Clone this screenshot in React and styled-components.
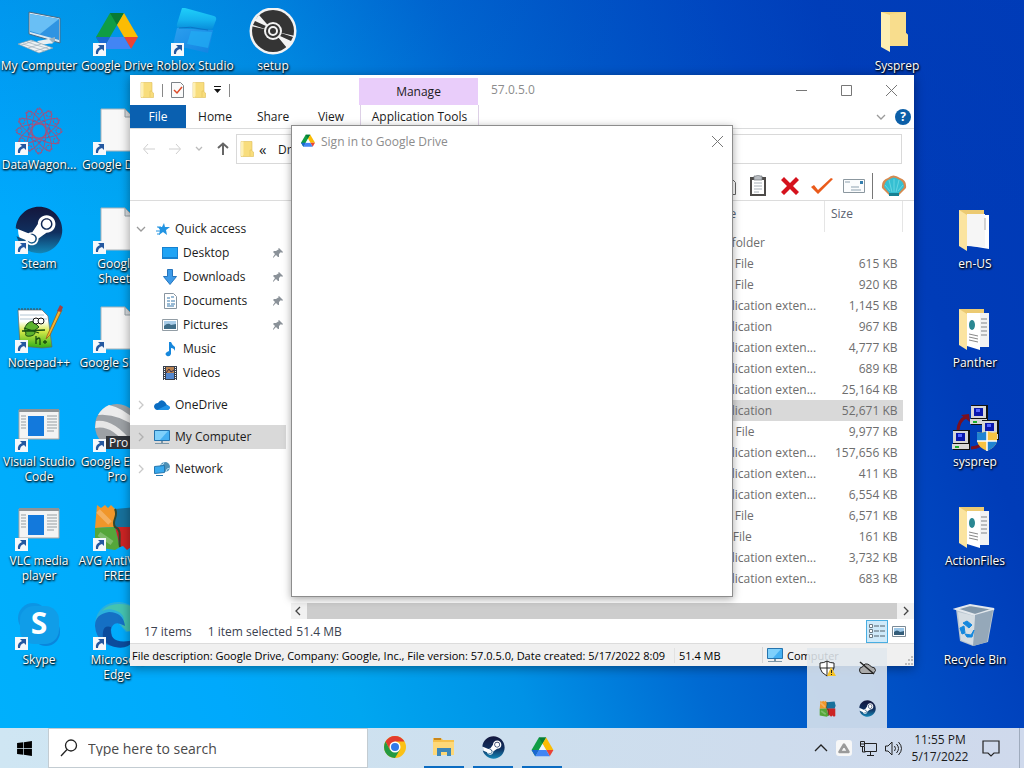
import React from "react";
import styled, { createGlobalStyle, css } from "styled-components";
import { FaSteam, FaWindows } from "react-icons/fa";

const GlobalStyle = createGlobalStyle`
  * {
    box-sizing: border-box;
  }
  body {
    margin: 0;
    font-family: "Open Sans", "Noto Sans", sans-serif;
    font-size: 12px;
    line-height: 15px;
    color: #1b1b1b;
    overflow: hidden;
  }
  button, input {
    font: inherit;
    color: inherit;
  }
  svg {
    display: block;
    flex: none;
  }
`;

const shortcuts = [
  { name: "My Computer", col: 1, row: 1, icon: "computer" },
  { name: "Google Drive", col: 2, row: 1, icon: "drive", link: true },
  { name: "Roblox Studio", col: 3, row: 1, icon: "roblox", link: true },
  { name: "setup", col: 4, row: 1, icon: "disc" },
  { name: "DataWagon...", col: 1, row: 2, icon: "wagon", link: true },
  { name: "Google Docs", col: 2, row: 2, icon: "blank", link: true },
  { name: "Steam", col: 1, row: 3, icon: "steam", link: true },
  { name: "Google Sheets", col: 2, row: 3, icon: "blank", link: true },
  { name: "Notepad++", col: 1, row: 4, icon: "notepad", link: true },
  { name: "Google Slides", col: 2, row: 4, icon: "blank", link: true },
  { name: "Visual Studio Code", col: 1, row: 5, icon: "app", link: true },
  { name: "Google Earth Pro", col: 2, row: 5, icon: "earth", link: true },
  { name: "VLC media player", col: 1, row: 6, icon: "app", link: true },
  { name: "AVG AntiVirus FREE", col: 2, row: 6, icon: "avg", link: true },
  { name: "Skype", col: 1, row: 7, icon: "skype", link: true },
  { name: "Microsoft Edge", col: 2, row: 7, icon: "edge", link: true },
  { name: "Sysprep", col: 12, row: 1, icon: "folder" },
  { name: "en-US", col: 13, row: 3, icon: "folderPaper" },
  { name: "Panther", col: 13, row: 4, icon: "folderDocs" },
  { name: "sysprep", col: 13, row: 5, icon: "sysprep" },
  { name: "ActionFiles", col: 13, row: 6, icon: "folderDocs" },
  { name: "Recycle Bin", col: 13, row: 7, icon: "bin" },
];

const files = [
  { type: "File folder", size: "" },
  { type: "PAK File", size: "615 KB" },
  { type: "PAK File", size: "920 KB" },
  { type: "Application exten...", size: "1,145 KB" },
  { type: "Application", size: "967 KB" },
  { type: "Application exten...", size: "4,777 KB" },
  { type: "Application exten...", size: "689 KB" },
  { type: "Application exten...", size: "25,164 KB" },
  { type: "Application", size: "52,671 KB", selected: true },
  { type: "DAT File", size: "9,977 KB" },
  { type: "Application exten...", size: "157,656 KB" },
  { type: "Application exten...", size: "411 KB" },
  { type: "Application exten...", size: "6,554 KB" },
  { type: "PAK File", size: "6,571 KB" },
  { type: "BIN File", size: "161 KB" },
  { type: "Application exten...", size: "3,732 KB" },
  { type: "Application exten...", size: "683 KB" },
];

const quickAccess = [
  { name: "Desktop", icon: "desktop", pinned: true },
  { name: "Downloads", icon: "downloads", pinned: true },
  { name: "Documents", icon: "documents", pinned: true },
  { name: "Pictures", icon: "pictures", pinned: true },
  { name: "Music", icon: "music" },
  { name: "Videos", icon: "videos" },
];

// ---------- icons ----------

const DriveLogo = ({ size = 48 }) => (
  <svg width={size} height={size} viewBox="0 0 48 48">
    <path d="M17 5h14L17 29 10 41 3 29z" fill="#0f9d45" />
    <path d="M17 5h14l-7 12z" fill="#087a35" />
    <path d="M31 5l14 24H31L24 17z" fill="#fbbc04" />
    <path d="M45 29l-7 12-7-12z" fill="#ea4335" />
    <path d="M17 29h14l7 12H10z" fill="#4285f4" />
    <path d="M3 29h14l-7 12z" fill="#1967d2" />
    <path d="M24 17l7 12H17z" fill="#fff" fillOpacity={size < 32 ? 0.7 : 0} />
  </svg>
);

const SteamLogo = ({ size }) => (
  <svg width={size} height={size} viewBox="0 0 48 48">
    <defs>
      <linearGradient id="steamBlue" x1="0" y1="0" x2="0" y2="1">
        <stop offset="0" stopColor="#14163c" />
        <stop offset=".55" stopColor="#10305f" />
        <stop offset="1" stopColor="#1387b8" />
      </linearGradient>
    </defs>
    <circle cx="24" cy="24" r="21" fill="#fff" />
    <FaSteam x="0" y="0" size={48} fill="url(#steamBlue)" />
  </svg>
);

const AvgLogo = ({ size = 48 }) => (
  <svg width={size} height={size} viewBox="0 0 48 48">
    <path d="M4 2l4 3 4-3 3 3 3-3 4 4v18L2 25z" fill="#f0962a" />
    <path d="M22 6l22-2 3 12-3 9H22z" fill="#17719c" />
    <path d="M2 25l20-1 5 20-5 3-20-3z" fill="#55a63a" />
    <path d="M22 24h24v21l-4 2-4-3-4 3-4-4-3 1z" fill="#cc2424" />
    <path d="M22 6c4 8-4 11 0 18 8 3 3 13 5 20" fill="none" stroke="#31472e" strokeWidth="2" />
    <path d="M5 8l12 12M6 31l13 9" stroke="#fff" strokeOpacity=".25" strokeWidth="5" />
  </svg>
);

const Folder = ({ width = 14, height = 16 }) => (
  <svg width={width} height={height} viewBox="0 0 14 16">
    <path d="M1 .5h11V10l1.500 1v4.500H1z" fill="#f8dd7c" stroke="#dfbe58" strokeWidth=".6" />
    <path d="M1 .5h2.500v13l-1 2L1 15z" fill="#fdf0b5" />
    <path d="M10 15V9h2" fill="none" stroke="#e2c25c" strokeWidth=".6" />
  </svg>
);

const Monitor = () => (
  <svg width="16" height="16" viewBox="0 0 16 16">
    <path d="M.5 1.500h15v10H.5z" fill="#45b0f2" stroke="#2573ad" />
    <path d="M1 2h13L6 11H1z" fill="#7fd0fb" />
    <path d="M7 12h2v2H7zM1 14h14v1H1z" fill="#7b95a6" />
  </svg>
);

const OpenFolder = ({ children }) => (
  <svg width="48" height="48" viewBox="0 0 48 48">
    <path d="M8 4h25v36H8z" fill="#ecca72" />
    {children}
    <path d="M8 4l8 5v36l-8-5z" fill="#fbe4a0" />
  </svg>
);

const icons = {
  computer: (
    <svg width="48" height="48" viewBox="0 0 48 48">
      <path d="M14 4l31 6v25l-31-9z" fill="#dce9f2" stroke="#476a86" />
      <path d="M15 6l29 5v21l-29-8z" fill="#2f94e2" />
      <path d="M15 6l29 5-19 15-10-3z" fill="#69bff5" />
      <path d="M27 33l13-4v4l-3 3z" fill="#9db4c3" />
      <path d="M22 33l12-2 4 4-12 2z" fill="#e8eef2" />
      <path d="M3 36l13-4 22 8-14 5z" fill="#eef2f4" stroke="#8aa0ae" strokeWidth=".7" />
      <path d="M8 36l22 7M12 34l22 7M6 37l13-4M13 40l13-4M20 43l13-4" stroke="#9fb0bc" strokeWidth=".7" />
    </svg>
  ),
  drive: <DriveLogo />,
  roblox: (
    <svg width="48" height="48" viewBox="0 0 48 48">
      <defs>
        <linearGradient id="rbx" x1="0" y1="0" x2="0" y2="1">
          <stop offset="0" stopColor="#1fd0fa" />
          <stop offset=".55" stopColor="#15b2ef" />
          <stop offset="1" stopColor="#078ad8" />
        </linearGradient>
        <linearGradient id="rbxBase" x1="0" y1="0" x2="1" y2="1">
          <stop offset="0" stopColor="#2c9fee" />
          <stop offset="1" stopColor="#1183e2" />
        </linearGradient>
      </defs>
      <path d="M6 20l36 2-5 23-35-8z" fill="url(#rbxBase)" />
      <path d="M20 23l21 1-4 16-21-4z" fill="#22aef3" fillOpacity=".7" />
      <path d="M11 0q1-1 3 0l29 8q3 1 2 4l-3 8q-2 3-6 2L9 20q-4 0-3-4z" fill="url(#rbx)" />
      <path d="M8 20q12-2 22 1l7 1" fill="none" stroke="#0a74c8" />
    </svg>
  ),
  disc: (
    <svg width="48" height="48" viewBox="0 0 48 48">
      <circle cx="24" cy="23" r="23.500" fill="#f3f3f3" />
      <circle cx="24" cy="23" r="21" fill="#343434" />
      <path d="M24 23L2 18l4-8zM24 23l22 5-4 9z" fill="#f3f3f3" />
      <path d="M24 23L5 13l5-6zM24 23l19 12-5 5z" fill="#f3f3f3" />
      <path d="M6 13l11 5-1 3-12-4zM42 33l-11-5 1-3 12 4z" fill="#343434" />
      <circle cx="24" cy="23" r="9" fill="#f3f3f3" />
      <circle cx="24" cy="23" r="7" fill="#343434" />
      <circle cx="24" cy="23" r="4" fill="none" stroke="#f3f3f3" strokeWidth="2" />
    </svg>
  ),
  wagon: (
    <svg width="48" height="48" viewBox="0 0 48 48" fill="none" stroke="#b5496f">
      {[0, 30, 60, 90, 120, 150].map((angle) => (
        <g key={angle} transform={`rotate(${angle} 24 24)`}>
          <ellipse cx="24" cy="24" rx="22" ry="7" strokeOpacity=".8" />
          <circle cx="4" cy="24" r="3" strokeDasharray="2 1" />
          <circle cx="44" cy="24" r="3" strokeDasharray="2 1" />
        </g>
      ))}
      <circle cx="24" cy="24" r="11" stroke="#4d62b0" strokeDasharray="3 2" />
    </svg>
  ),
  blank: (
    <svg width="48" height="48" viewBox="0 0 48 48">
      <path d="M8 2h24l8 8v34H8z" fill="#f8f8f8" stroke="#a9b3b9" />
      <path d="M32 2v8h8z" fill="#d9dde0" stroke="#98a3a9" />
    </svg>
  ),
  steam: <SteamLogo size={48} />,
  notepad: (
    <svg width="48" height="48" viewBox="0 0 48 48">
      <defs>
        <linearGradient id="npp" x1="0" y1="0" x2="0" y2="1">
          <stop offset=".3" stopColor="#fff" />
          <stop offset=".55" stopColor="#d8ea4a" />
          <stop offset="1" stopColor="#2fae18" />
        </linearGradient>
      </defs>
      <path d="M3 5h24l6 6 4 31-10 1-22-2z" fill="url(#npp)" stroke="#666" strokeWidth=".7" />
      <path d="M4 5v-2m3 2v-2m3 2v-2m3 2v-2m3 2v-2m3 2v-2m3 2v-2m3 2v-2" stroke="#444" />
      <path d="M5 10h24M5 14h27" stroke="#9fb6c8" strokeWidth=".8" />
      <path d="M12 19q5-5 9 0l3 3-5 4q3 3-3 5-7 1-5-3-3-4 1-9z" fill="#5db32d" stroke="#174d10" />
      <circle cx="21" cy="16" r="3" fill="#fff" stroke="#111" />
      <circle cx="26" cy="16" r="3" fill="#fff" stroke="#111" />
      <path d="M7 26l23-1M9 23l15 5M21 31v8m0-4q4-4 4 0v5m3-3h4m-2-2v4" fill="none" stroke="#174d10" strokeWidth="1.300" />
      <path d="M32 31L44 4l3 1-12 25-4 4z" fill="#f4b52f" stroke="#95601b" strokeWidth=".8" />
      <path d="M42 6l3-6 3 2-2 5z" fill="#a34242" />
    </svg>
  ),
  app: (
    <svg width="48" height="48" viewBox="0 0 48 48">
      <path d="M4 6h40v29H4z" fill="#f3f4f4" stroke="#a5a5a5" />
      <path d="M4 5h40v3H4z" fill="#8e9396" />
      <path d="M13 12h16v20H13z" fill="#1379dc" />
      <path d="M6 12h5m-5 3h5m-5 3h5m-5 3h5m-5 3h5M32 12h10m-10 3h10m-10 3h10m-10 3h10m-10 3h10m-10 3h7" stroke="#969da1" />
    </svg>
  ),
  earth: (
    <svg width="48" height="48" viewBox="0 0 48 48">
      <circle cx="24" cy="22" r="22" fill="#9da1a5" />
      <path d="M5 11q4-7 11-10 14 3 26 15l4 9Q25 9 5 11z" fill="#ececec" />
      <path d="M3 17q18-2 36 21l-5 4Q18 20 2 24z" fill="#e6e6e6" />
      <path d="M13 32h35v13H13z" fill="#30343a" />
      <text x="16" y="43" fontSize="12" fill="#fff" fontFamily="Open Sans">Pro</text>
    </svg>
  ),
  avg: <AvgLogo />,
  skype: (
    <svg width="48" height="48" viewBox="0 0 48 48">
      <circle cx="18" cy="16" r="15" fill="#0c95e4" />
      <circle cx="31" cy="30" r="14" fill="#0a86dc" />
      <rect x="5" y="4" width="39" height="38" rx="14" fill="#109de8" />
      <text x="24" y="32" textAnchor="middle" fontSize="30" fontWeight="700" fill="#fff" fontFamily="Open Sans">S</text>
    </svg>
  ),
  edge: (
    <svg width="48" height="48" viewBox="0 0 48 48">
      <path d="M2 21Q5 0 27 0q18 2 20 18-1 12-14 12l-7-8q0-9-9-10Q6 12 2 21z" fill="#2bb0dc" />
      <path d="M26 2q20 0 21 17-1 11-13 10l-5-5q6-12-8-16-6-2-12 1 6-7 17-7z" fill="#45c3b0" />
      <path d="M2 24q0-12 14-14 14 0 16 14-12-7-14 4 0 12 12 17Q4 46 2 24z" fill="#1570c4" />
      <path d="M18 25q-3 19 24 13-8 10-20 7Q8 41 10 30q1-7 8-5z" fill="#0b4c9d" />
    </svg>
  ),
  folder: (
    <svg width="48" height="48" viewBox="0 0 48 48">
      <path d="M8 4h25v21l2 2v11H8z" fill="#f3d47c" />
      <path d="M17 6l16-2v21l2 2v11H17z" fill="#f8dd8d" />
      <path d="M8 4l9 3v37l-9-5z" fill="#fdeeb3" />
    </svg>
  ),
  folderPaper: (
    <OpenFolder>
      <path d="M20 9h18v34l-18-3z" fill="#fff" />
      <path d="M16 8h18v33l-18-1z" fill="#f6f6f6" />
      <path d="M34 12v12" stroke="#aaa" />
    </OpenFolder>
  ),
  folderDocs: (
    <OpenFolder>
      <path d="M26 8h12v34H26z" fill="#f1f2f3" />
      <path d="M30 14h6m-6 4h6m-6 4h6m-6 4h6m-6 4h6" stroke="#7e8387" />
      <path d="M16 8h13v37l-13-4z" fill="#fff" />
      <ellipse cx="21" cy="20" rx="3" ry="5" fill="#2a8792" />
      <path d="M18 29l9 2m-9 1l9 2m-9 1l9 2" stroke="#888" />
    </OpenFolder>
  ),
  sysprep: (
    <svg width="48" height="48" viewBox="0 0 48 48">
      <path d="M7 26q1-10 8-13M20 44q10-1 15-7" fill="none" stroke="#7b1020" strokeWidth="3" />
      <path d="M10 11l8-1 1 8z" fill="#7b1020" />
      {[[19, 1], [30, 16], [1, 26]].map(([x, y]) => (
        <g key={x} transform={`translate(${x} ${y})`}>
          <path d="M1 0h17v20H1z" fill="#111" />
          <path d="M1 1h15v12H1z" fill="#d6d6d6" />
          <path d="M4 3h9v8H4z" fill="#0917ad" />
          <path d="M6 4h4v3H6z" fill="#5265ff" />
          <path d="M0 14h17v5H0z" fill="#d8d8d8" />
          <path d="M3 16h4v2H3z" fill="#20ae2d" />
        </g>
      ))}
      <path d="M36 27q5 3 10 1v9q-1 6-10 10-9-4-10-10v-9q5 2 10-1z" fill="#f6c343" />
      <path d="M36 27v10H26v-9q5 2 10-1zM36 47V37h10q-1 6-10 10z" fill="#2083d2" />
      <path d="M36 27v20M26 37h20" stroke="#fff" strokeWidth="1.500" />
    </svg>
  ),
  bin: (
    <svg width="48" height="48" viewBox="0 0 48 48">
      <path d="M5 7l14-4 24 4-6 33-15 4-13-5z" fill="#b9c6d1" />
      <path d="M5 7l14-4 24 4-19 6z" fill="#8196a8" stroke="#e3e8ed" strokeWidth="2" />
      <path d="M24 13l18-5-6 32-14 4z" fill="#95a8b9" />
      <path d="M7 10l17 4-2 29-12-5z" fill="#dce2e7" fillOpacity=".8" />
      <path d="M12 21l4-2 5 4-3 3zM9 26l4-2 1 7-3 1zM14 32l6 1 3-5-2 7h-5z" fill="#1588dd" stroke="#1588dd" />
    </svg>
  ),
  desktop: (
    <svg width="16" height="16" viewBox="0 0 16 16">
      <path d="M0 2h16v12H0z" fill="#1681d0" />
      <path d="M1 3h14v9H1z" fill="#20a4f5" />
    </svg>
  ),
  downloads: (
    <svg width="16" height="16" viewBox="0 0 16 16">
      <path d="M5.500.5h5v7h4L8 15.500 1.500 7.500h4z" fill="#3d9be9" stroke="#2675bc" />
    </svg>
  ),
  documents: (
    <svg width="16" height="16" viewBox="0 0 16 16">
      <path d="M2.500.5h9l3 3v12h-12z" fill="#fff" stroke="#8895a0" />
      <path d="M5 5h3M9 4h3M5 8h3m1 0h4M5 11h3m1 0h4M5 13h7" stroke="#3477aa" />
    </svg>
  ),
  pictures: (
    <svg width="16" height="16" viewBox="0 0 16 16">
      <path d="M.5 2.500h15v11H.5z" fill="#fff" stroke="#929da5" />
      <path d="M2 4h12v8H2z" fill="#a8cce8" />
      <path d="M2 9q4-4 7-1l5-1v5H2z" fill="#3f6d88" />
    </svg>
  ),
  music: (
    <svg width="16" height="16" viewBox="0 0 16 16">
      <path d="M7 1h2q1 3 4 5v4q-1-3-4-3v6q-1 3-4 2-3-2 0-4l2-1z" fill="#1687dc" />
    </svg>
  ),
  videos: (
    <svg width="16" height="16" viewBox="0 0 16 16">
      <path d="M1 1h14v14H1z" fill="#39404c" />
      <path d="M4 2h8v6H4z" fill="#b98250" />
      <path d="M4 8h8v6H4z" fill="#5287cf" />
      <path d="M2.500 2v13M13.500 2v13" stroke="#fff" strokeDasharray="1 1" />
      <path d="M4 8l3-4 2 3 3-2" stroke="#342c4a" fill="none" />
    </svg>
  ),
};

const ShortcutArrow = styled(({ className }) => (
  <svg className={className} width="13" height="13" viewBox="0 0 13 13">
    <path d="M0 0h13v13H0z" fill="#f4f8fb" />
    <path d="M5 2h6v6L9 6q-4 1-4 5H3q-1-5 4-7z" fill="#2458a0" />
  </svg>
))`
  position: absolute;
  left: 0;
  bottom: 0;
`;

const Chevron = ({ points = "1,3 5,7 9,3", color = "#9a9a9a" }) => (
  <svg width="10" height="10" viewBox="0 0 10 10">
    <polyline points={points} fill="none" stroke={color} strokeWidth="1.300" />
  </svg>
);

const Pin = () => (
  <svg width="12" height="12" viewBox="0 0 12 12">
    <path d="M7 1l4 4-1 1-1-1-2 2v3L6 10 4 8l-3 3v-1l2-3-2-2 1-1h2l3-2-1-1z" fill="#8b9299" />
  </svg>
);

const Arrow = ({ direction, color }) => {
  const turn = { left: 0, up: 90, right: 180 }[direction];
  return (
    <svg width="14" height="14" viewBox="0 0 14 14">
      <g transform={`rotate(${turn} 7 7)`}>
        <path d="M13 7H2M6 2L1.500 7 6 12" fill="none" stroke={color} strokeWidth={direction === "up" ? 2 : 1} />
      </g>
    </svg>
  );
};

// ---------- parts ----------

const Shortcut = ({ name, icon, link, col, row }) => (
  <ShortcutButton $col={col} $row={row}>
    <ShortcutIcon>
      {icons[icon]}
      {link && <ShortcutArrow />}
    </ShortcutIcon>
    <ShortcutLabel>{name}</ShortcutLabel>
  </ShortcutButton>
);

const SideBar = () => (
  <SidePane>
    <TreeGroup>
      <TreeItem>
        <Chevron />
        <svg width="16" height="16" viewBox="0 0 16 16">
          <path d="M10 2l1 4h5l-4 3 1 5-4-3-4 3 1-5-2-3h4z" fill="#2294e2" />
          <path d="M3 6h4M2 10h4M3 13h3" stroke="#2294e2" />
        </svg>
        <span>Quick access</span>
      </TreeItem>
      {quickAccess.map((item) => (
        <TreeItem key={item.name} $nested>
          {icons[item.icon]}
          <span>{item.name}</span>
          {item.pinned && <Pin />}
        </TreeItem>
      ))}
    </TreeGroup>
    <TreeGroup>
      <TreeItem>
        <Chevron points="3,1 7,5 3,9" color="#c9c9c9" />
        <svg width="16" height="16" viewBox="0 0 16 16">
          <path d="M3 13Q0 12 0 9q1-3 4-3 3-5 7-1l2 3q3 1 3 3l-2 2z" fill="#0b6dc2" />
          <path d="M3 13l10-5q3 1 3 3l-2 2z" fill="#1f93e8" />
        </svg>
        <span>OneDrive</span>
      </TreeItem>
    </TreeGroup>
    <TreeGroup>
      <TreeItem $selected>
        <Chevron points="3,1 7,5 3,9" color="#b0b0b0" />
        <Monitor />
        <span>My Computer</span>
      </TreeItem>
    </TreeGroup>
    <TreeGroup>
      <TreeItem>
        <Chevron points="3,1 7,5 3,9" color="#c9c9c9" />
        <svg width="16" height="16" viewBox="0 0 16 16">
          <circle cx="11" cy="6" r="5" fill="#4f91b6" />
          <path d="M7 4q3 0 3-3M12 11q0-4 4-4" stroke="#b8dcf0" fill="none" />
          <path d="M.5 5.500l10-1v7l-10 1z" fill="#38a9ee" stroke="#2677ae" />
          <path d="M2 14.500h7" stroke="#2677ae" />
        </svg>
        <span>Network</span>
      </TreeItem>
    </TreeGroup>
  </SidePane>
);

const FileList = () => (
  <FilePane>
    <Table>
      <colgroup>
        <col />
        <TypeCol />
        <SizeCol />
      </colgroup>
      <thead>
        <tr>
          <HeadCell />
          <HeadCell>Type</HeadCell>
          <HeadCell $line>Size</HeadCell>
        </tr>
      </thead>
      <tbody>
        {files.map((file, i) => (
          <FileRow key={i} $selected={file.selected}>
            <td />
            <td>{file.type}</td>
            <SizeCell>{file.size}</SizeCell>
          </FileRow>
        ))}
      </tbody>
    </Table>
    <ScrollBar>
      <Chevron points="7,1 3,5 7,9" color="#444" />
      <ScrollThumb />
      <Chevron points="3,1 7,5 3,9" color="#444" />
    </ScrollBar>
  </FilePane>
);

const Explorer = () => (
  <ExplorerWindow>
    <TitleBar>
      <QuickTools>
        <Folder />
        <Divider />
        <svg width="13" height="16" viewBox="0 0 13 16">
          <path d="M.5.5h9l3 3v12H.5z" fill="#fafafa" stroke="#7c8287" />
          <path d="M3 8l3 3 5-6" fill="none" stroke="#dc4a28" strokeWidth="1.500" />
        </svg>
        <Folder />
        <svg width="7" height="8" viewBox="0 0 7 8">
          <path d="M0 0h7v1H0zM0 3h7L3.500 7z" fill="#111" />
        </svg>
        <Divider />
      </QuickTools>
      <ManageTab>Manage</ManageTab>
      <WindowTitle>57.0.5.0</WindowTitle>
      <WindowButton aria-label="Minimize">
        <svg width="11" height="11" viewBox="0 0 11 11"><path d="M0 5.500h11" stroke="#777" /></svg>
      </WindowButton>
      <WindowButton aria-label="Maximize">
        <svg width="11" height="11" viewBox="0 0 11 11"><path d="M.5.5h10v10H.5z" fill="none" stroke="#777" /></svg>
      </WindowButton>
      <WindowButton aria-label="Close">
        <svg width="11" height="11" viewBox="0 0 11 11"><path d="M0 0l11 11M11 0L0 11" stroke="#777" /></svg>
      </WindowButton>
    </TitleBar>
    <Ribbon>
      <RibbonTab $file>File</RibbonTab>
      <RibbonTab>Home</RibbonTab>
      <RibbonTab>Share</RibbonTab>
      <RibbonTab>View</RibbonTab>
      <RibbonTab $tools>Application Tools</RibbonTab>
      <RibbonEnd>
        <Chevron />
        <HelpButton>?</HelpButton>
      </RibbonEnd>
    </Ribbon>
    <NavBar>
      <NavButtons>
        <Arrow direction="left" color="#cfcfcf" />
        <Arrow direction="right" color="#cfcfcf" />
        <Chevron points="2,3 5,6 8,3" color="#bbb" />
        <Arrow direction="up" color="#666" />
      </NavButtons>
      <AddressBar>
        <Folder />
        <Crumbs>«</Crumbs>
        <span>Drive</span>
      </AddressBar>
    </NavBar>
    <ToolBar>
      <ToolButton aria-label="Copy">
        <svg width="20" height="22" viewBox="0 0 20 22">
          <path d="M6.500 4.500h10l3 3v12h-13z" fill="#fff" stroke="#666" />
          <path d="M9 9h8m-8 3h8m-8 3h8" stroke="#999" />
        </svg>
      </ToolButton>
      <ToolButton aria-label="Paste">
        <svg width="20" height="22" viewBox="0 0 20 22">
          <path d="M2 2h16v19H2z" fill="#4e4b49" />
          <path d="M4 5h12v14H4z" fill="#fff" />
          <path d="M6 8h8m-8 3h8m-8 3h8m-8 3h5" stroke="#a8b0b8" />
          <path d="M6 1h2l2-1 2 1h2v4H6z" fill="#b9bdc2" stroke="#6d7278" strokeWidth=".7" />
        </svg>
      </ToolButton>
      <ToolButton aria-label="Delete">
        <svg width="20" height="20" viewBox="0 0 20 20">
          <path d="M1 4l3-3 6 6 6-6 3 3-6 6 6 6-3 3-6-6-6 6-3-3 6-6z" fill="#d5121d" />
        </svg>
      </ToolButton>
      <ToolButton aria-label="Properties">
        <svg width="24" height="20" viewBox="0 0 24 20">
          <path d="M1 11l3-2 4 5L21 2l2 1L8 18z" fill="#ea5b1b" />
        </svg>
      </ToolButton>
      <ToolButton aria-label="Email">
        <svg width="22" height="14" viewBox="0 0 22 14">
          <path d="M.5.5h21v13H.5z" fill="#fbfcfd" stroke="#8b979f" />
          <path d="M2 3h5m1 5h8m-8 3h10" stroke="#8ea1af" />
          <path d="M17 2h3v3h-3z" fill="#347eae" />
        </svg>
      </ToolButton>
      <ToolDivider />
      <ToolButton aria-label="Settings">
        <svg width="26" height="22" viewBox="0 0 26 22">
          <path d="M8 20L1 13q-1-8 6-10 5-5 12 0 7 2 6 10l-7 7z" fill="#d68a50" />
          <path d="M9 19L3 12q1-7 6-8 4-3 8 0 6 2 6 8l-6 7z" fill="#35bfd2" />
          <path d="M13 17V4M11 17L8 5M15 17l3-12M9 16l-5-6M17 16l5-6" stroke="#7bdfe8" strokeWidth=".7" />
          <path d="M8 18h10v3H8z" fill="#178092" />
        </svg>
      </ToolButton>
    </ToolBar>
    <Body>
      <SideBar />
      <FileList />
    </Body>
    <ItemsBar>
      <span>17 items</span>
      <Selection>
        <span>1 item selected</span>
        <span>51.4 MB</span>
      </Selection>
      <ViewButton aria-label="Details" $active>
        <svg width="18" height="14" viewBox="0 0 18 14">
          <path d="M1.500.5h3v3h-3zM1.500 5.500h3v3h-3zM1.500 10.500h3v3h-3z" fill="#fff" stroke="#6c7a84" />
          <path d="M6 2h5m1 0h5M6 7h5m1 0h5M6 12h5m1 0h5" stroke="#52616b" />
        </svg>
      </ViewButton>
      <ViewButton aria-label="Large icons">
        <svg width="14" height="11" viewBox="0 0 14 11">
          <path d="M.5.5h13v10H.5z" fill="#fff" stroke="#7b8a96" />
          <path d="M2 2h10v7H2z" fill="#9ec8e8" />
          <path d="M2 6q3-3 6 0l4-1v4H2z" fill="#345d79" />
        </svg>
      </ViewButton>
    </ItemsBar>
    <InfoBar>
      <Description>
        File description: Google Drive, Company: Google, Inc., File version: 57.0.5.0, Date created: 5/17/2022 8:09
      </Description>
      <FileSize>51.4 MB</FileSize>
      <Zone>
        <Monitor />
        <span>Computer</span>
      </Zone>
      <svg width="10" height="10" viewBox="0 0 10 10">
        <path d="M7 0h2v2H7zM4 3h2v2H4zM7 3h2v2H7zM1 7h2v2H1zM4 7h2v2H4zM7 7h2v2H7z" fill="#bcbcbc" />
      </svg>
    </InfoBar>
  </ExplorerWindow>
);

const TaskBar = () => (
  <Bar>
    <StartButton aria-label="Start">
      <FaWindows size={17} />
    </StartButton>
    <SearchBox>
      <svg width="18" height="18" viewBox="0 0 18 18" fill="none" stroke="#222" strokeWidth="1.300">
        <circle cx="11" cy="6.500" r="5.500" />
        <path d="M7 10.500L1 17" />
      </svg>
      <SearchInput aria-label="Search" placeholder="Type here to search" />
    </SearchBox>
    <Apps>
      <AppButton aria-label="Chrome">
        <svg width="22" height="22" viewBox="0 0 22 22">
          <circle cx="11" cy="11" r="11" fill="#fbc116" />
          <path d="M1.500 5.500A11 11 0 0 1 20.500 5.500H11L6 14z" fill="#e33b2e" />
          <path d="M1.500 5.500A11 11 0 0 0 11 22L16 13.500 6 14z" fill="#249a41" />
          <circle cx="11" cy="11" r="5.500" fill="#fff" />
          <circle cx="11" cy="11" r="4" fill="#3279e8" />
        </svg>
      </AppButton>
      <AppButton aria-label="File Explorer" $open>
        <svg width="22" height="20" viewBox="0 0 22 20">
          <path d="M0 1h8l2 2h11v15H0z" fill="#f5c04a" />
          <path d="M0 5h21v13H0z" fill="#fdd878" />
          <path d="M1 1h7v2H1z" fill="#c9861b" />
          <path d="M4 19v-8h14v8h-4v-4H8v4z" fill="#3d87b8" />
        </svg>
      </AppButton>
      <AppButton aria-label="Steam" $open>
        <SteamLogo size={23} />
      </AppButton>
      <AppButton aria-label="Google Drive" $open>
        <DriveLogo size={25} />
      </AppButton>
    </Apps>
    <Tray>
      <svg width="14" height="10" viewBox="0 0 14 10">
        <path d="M1 8l6-6 6 6" fill="none" stroke="#222" strokeWidth="1.300" />
      </svg>
      <svg width="16" height="16" viewBox="0 0 16 16">
        <rect width="16" height="16" rx="3" fill="#f7f7f7" />
        <path d="M8 4.500l4.500 7.500h-9z" fill="none" stroke="#9a9a9a" strokeWidth="2.500" strokeLinejoin="round" />
      </svg>
      <svg width="17" height="15" viewBox="0 0 17 15" fill="none" stroke="#222">
        <path d="M5 2.500h11.500v8H4.500V6M10.500 11v3M7 14.500h7M.5.500h4v5h-4zM2.500 6v5h3M1 3h3" />
      </svg>
      <svg width="17" height="15" viewBox="0 0 17 15" fill="none" stroke="#222">
        <path d="M.5 5v5H3l4 4V1L3 5zM9.500 5q2 2.500 0 5M11.500 3q4 4.500 0 9M13.500 1q6 6.500 0 13" />
      </svg>
      <Clock>
        <span>11:55 PM</span>
        <span>5/17/2022</span>
      </Clock>
      <svg width="18" height="17" viewBox="0 0 18 17" fill="none" stroke="#222" strokeWidth="1.200">
        <path d="M1 1h16v12h-5l-3 3-3-3H1z" />
      </svg>
      <ShowDesktop aria-label="Show desktop" />
    </Tray>
  </Bar>
);

export default function App() {
  return (
    <Screen>
      <GlobalStyle />
      <Desktop>
        {shortcuts.map((item) => (
          <Shortcut key={item.name} {...item} />
        ))}
        <Explorer />
        <SignInWindow role="dialog" aria-label="Sign in to Google Drive">
          <SignInHeader>
            <DriveLogo size={16} />
            <span>Sign in to Google Drive</span>
            <CloseButton aria-label="Close dialog">
              <svg width="11" height="11" viewBox="0 0 11 11"><path d="M0 0l11 11M11 0L0 11" stroke="#777" /></svg>
            </CloseButton>
          </SignInHeader>
        </SignInWindow>
        <TrayPopup>
          <svg width="17" height="17" viewBox="0 0 17 17">
            <path d="M8 1q3 2 7 2v5q-1 5-7 8-6-3-7-8V3q4 0 7-2z" fill="#fff" stroke="#222" />
            <path d="M8 1v15M1 8h14" stroke="#222" />
            <path d="M12 7l5 9H8z" fill="#f5c226" />
            <path d="M12.500 10v3m0 1v1" stroke="#222" />
          </svg>
          <svg width="17" height="14" viewBox="0 0 17 14">
            <path d="M3 12.500Q.5 12 .5 9q0-3 3-3 2-5 7-2l2 2q4 0 4 3.500l-2 3z" fill="#aaa" stroke="#222" />
            <path d="M1 1l14 12" stroke="#222" strokeWidth="1.500" />
          </svg>
          <AvgLogo size={17} />
          <SteamLogo size={17} />
        </TrayPopup>
      </Desktop>
      <TaskBar />
    </Screen>
  );
}

// ---------- styles ----------

const Screen = styled.div`
  height: 100vh;
  display: flex;
  flex-direction: column;
`;

const Desktop = styled.main`
  position: relative;
  flex: 1;
  min-height: 0;
  display: grid;
  grid-template-columns: repeat(13, 78px);
  grid-template-rows: repeat(7, 99px);
  background: linear-gradient(180deg, rgba(0, 70, 190, 0.18), rgba(0, 70, 190, 0) 30%),
    linear-gradient(
      69deg,
      #00b0fc 0%,
      #00a9fc 18%,
      #00a6f0 28%,
      #0092e6 41%,
      #006ad2 55%,
      #0058c8 65%,
      #0046c0 76%,
      #003cb8 84%,
      #0039b6 100%
    );
`;

const ShortcutButton = styled.button`
  grid-column: ${({ $col }) => $col};
  grid-row: ${({ $row }) => $row};
  display: flex;
  flex-direction: column;
  align-items: center;
  gap: 2px;
  padding: 8px 0 0;
  border: none;
  background: none;
`;

const ShortcutIcon = styled.span`
  position: relative;
`;

const ShortcutLabel = styled.span`
  max-width: 78px;
  color: #fff;
  text-align: center;
  text-shadow: 1px 1px 2px #000, 0 1px 2px rgba(0, 0, 0, 0.8);
`;

const ExplorerWindow = styled.section`
  position: absolute;
  top: 75px;
  left: 130px;
  right: 110px;
  bottom: 62px;
  display: flex;
  flex-direction: column;
  background: #fff;
  box-shadow: 0 2px 10px rgba(0, 0, 0, 0.4);
`;

const TitleBar = styled.header`
  display: flex;
  height: 30px;
`;

const QuickTools = styled.div`
  width: 229px;
  display: flex;
  align-items: center;
  gap: 8px;
  padding-left: 10px;
`;

const Divider = styled.span`
  width: 1px;
  height: 13px;
  background: #888;
`;

const ManageTab = styled.div`
  width: 119px;
  margin-top: 3px;
  padding-top: 6px;
  text-align: center;
  background: #e9cdfa;
`;

const WindowTitle = styled.span`
  flex: 1;
  padding: 7px 13px;
  color: #8c8c8c;
`;

const WindowButton = styled.button`
  width: 45px;
  display: flex;
  align-items: center;
  justify-content: center;
  padding: 0;
  border: none;
  background: none;
`;

const Ribbon = styled.nav`
  display: flex;
  height: 24px;
  border-bottom: 1px solid #dadbdc;
`;

const RibbonTab = styled.button`
  width: 58px;
  padding: 0;
  border: none;
  background: none;
  ${({ $file }) =>
    $file &&
    css`
      width: 56px;
      color: #fff;
      background: #0a60b0;
    `}
  ${({ $tools }) =>
    $tools &&
    css`
      width: 119px;
      border: solid #ddd0e6;
      border-width: 0 1px;
    `}
`;

const RibbonEnd = styled.div`
  display: flex;
  align-items: center;
  gap: 9px;
  margin-left: auto;
  padding-right: 3px;
`;

const HelpButton = styled.button`
  width: 16px;
  height: 16px;
  padding: 0;
  border: none;
  border-radius: 50%;
  color: #fff;
  font-weight: 700;
  line-height: 16px;
  background: #0c5fa8;
`;

const NavBar = styled.div`
  height: 43px;
  display: flex;
  align-items: flex-start;
  padding: 5px 12px 0;
`;

const NavButtons = styled.div`
  width: 94px;
  height: 30px;
  display: flex;
  align-items: center;
  gap: 12px;
`;

const AddressBar = styled.div`
  flex: 1;
  height: 30px;
  display: flex;
  align-items: center;
  gap: 5px;
  padding-left: 3px;
  border: 1px solid #d9d9d9;
`;

const Crumbs = styled.span`
  width: 14px;
  font-size: 15px;
`;

const ToolBar = styled.div`
  height: 29px;
  display: flex;
  align-items: center;
  justify-content: flex-end;
  padding-right: 4px;
  border-bottom: 1px solid #dcdcdc;
`;

const ToolButton = styled.button`
  width: 32px;
  height: 28px;
  display: flex;
  align-items: center;
  justify-content: center;
  padding: 0;
  border: none;
  background: none;
`;

const ToolDivider = styled.span`
  width: 1px;
  height: 26px;
  margin: 0 5px 0 2px;
  background: #777;
`;

const Body = styled.div`
  flex: 1;
  min-height: 0;
  display: flex;
`;

const SidePane = styled.aside`
  width: 161px;
  display: flex;
  flex-direction: column;
  gap: 8px;
  padding: 16px 5px 0 0;
`;

const TreeGroup = styled.div`
  display: flex;
  flex-direction: column;
`;

const TreeItem = styled.div`
  height: 24px;
  display: flex;
  align-items: center;
  gap: 5px;
  padding-left: ${({ $nested }) => ($nested ? "32px" : "6px")};
  padding-right: 2px;
  background: ${({ $selected }) => ($selected ? "#d9d9d9" : "none")};

  svg:first-child {
    margin-right: ${({ $nested }) => ($nested ? "0" : "3px")};
  }
  span {
    flex: 1;
    padding-bottom: 1px;
    white-space: nowrap;
  }
`;

const FilePane = styled.div`
  flex: 1;
  min-width: 0;
  display: flex;
  flex-direction: column;
  justify-content: space-between;
`;

const Table = styled.table`
  width: calc(100% - 11px);
  table-layout: fixed;
  border-collapse: collapse;
  color: #6d6d6d;

  td {
    height: 21px;
    padding: 0;
    white-space: nowrap;
  }
`;

const TypeCol = styled.col`
  width: 115px;
`;

const SizeCol = styled.col`
  width: 78px;
`;

const HeadCell = styled.th`
  height: 31px;
  padding: 5px 0 0 ${({ $line }) => ($line ? "6px" : "0")};
  border: solid #e5e5e5;
  border-width: ${({ $line }) => ($line ? "0 1px" : "0")};
  color: #5a6270;
  font-weight: 400;
  text-align: left;
  vertical-align: top;
`;

const FileRow = styled.tr`
  background: ${({ $selected }) => ($selected ? "#d9d9d9" : "none")};
`;

const SizeCell = styled.td`
  text-align: right;

  && {
    padding-right: 5px;
  }
`;

const ScrollBar = styled.div`
  height: 16px;
  display: flex;
  align-items: center;
  gap: 4px;
  padding: 0 3px 0 2px;
  background: #f1f1f1;
`;

const ScrollThumb = styled.span`
  flex: 1;
  height: 16px;
  background: #cdcdcd;
`;

const ItemsBar = styled.div`
  height: 24px;
  display: flex;
  align-items: center;
  padding: 0 4px 0 14px;
  color: #3b4250;
`;

const Selection = styled.div`
  flex: 1;
  display: flex;
  gap: 4px;
  padding-left: 16px;
`;

const ViewButton = styled.button`
  width: 22px;
  height: 23px;
  display: flex;
  align-items: center;
  justify-content: center;
  padding: 0;
  border: 1px solid ${({ $active }) => ($active ? "#49aee2" : "transparent")};
  background: ${({ $active }) => ($active ? "#cfeafa" : "none")};
`;

const InfoBar = styled.footer`
  height: 23px;
  display: flex;
  align-items: center;
  padding-left: 2px;
  border-top: 1px solid #dcdcdc;
  color: #000;
  font-size: 11px;
  background: #f0f0f0;

  > svg {
    align-self: flex-end;
  }
`;

const Description = styled.span`
  flex: 1;
  white-space: nowrap;
`;

const FileSize = styled.span`
  width: 88px;
  padding-left: 4px;
  border-left: 1px solid #e2e2e2;
`;

const Zone = styled.span`
  width: 142px;
  display: flex;
  align-items: center;
  gap: 4px;
  padding-left: 4px;
  border-left: 1px solid #d5d5d5;
`;

const SignInWindow = styled.section`
  position: absolute;
  top: 125px;
  left: 291px;
  right: 291px;
  bottom: 131px;
  border: 1px solid #8d8d8d;
  background: #fff;
  box-shadow: 0 2px 8px rgba(0, 0, 0, 0.35);
`;

const SignInHeader = styled.header`
  height: 30px;
  display: flex;
  align-items: center;
  gap: 5px;
  padding-left: 8px;
  color: #8c8c8c;
`;

const CloseButton = styled(WindowButton)`
  width: 30px;
  margin-left: auto;
`;

const TrayPopup = styled.div`
  position: absolute;
  right: 137px;
  bottom: 0;
  width: 80px;
  height: 80px;
  display: grid;
  grid-template-columns: 1fr 1fr;
  place-items: center;
  background: rgba(225, 232, 238, 0.87);
`;

const Bar = styled.footer`
  height: 40px;
  display: flex;
  background: linear-gradient(90deg, #cfe6f3, #cddfee 50%, #cfd9ec);
`;

const StartButton = styled.button`
  width: 48px;
  display: flex;
  align-items: center;
  justify-content: center;
  padding: 0;
  border: none;
  color: #000;
  background: none;
`;

const SearchBox = styled.label`
  width: 320px;
  display: flex;
  align-items: center;
  gap: 10px;
  padding-left: 11px;
  border: 1px solid #c3ccd2;
  background: #fff;
`;

const SearchInput = styled.input`
  flex: 1;
  min-width: 0;
  padding: 0;
  border: none;
  outline: none;
  font-size: 14px;
  background: none;

  &::placeholder {
    color: #4a4a4a;
    opacity: 1;
  }
`;

const Apps = styled.div`
  flex: 1;
  display: flex;
  gap: 9px;
  padding-left: 7px;
`;

const AppButton = styled.button`
  width: 40px;
  display: flex;
  align-items: center;
  justify-content: center;
  padding: 0;
  border: solid ${({ $open }) => ($open ? "#0b6cc2" : "transparent")};
  border-width: 0 0 2px;
  background: none;
`;

const Tray = styled.div`
  display: flex;
  align-items: center;
  gap: 8px;
`;

const Clock = styled.time`
  width: 60px;
  display: flex;
  flex-direction: column;
  align-items: center;
  gap: 2px;
  margin-right: 4px;
`;

const ShowDesktop = styled.button`
  align-self: stretch;
  width: 5px;
  margin-left: 11px;
  padding: 0;
  border: none;
  border-left: 1px solid #9fabbd;
  background: none;
`;
